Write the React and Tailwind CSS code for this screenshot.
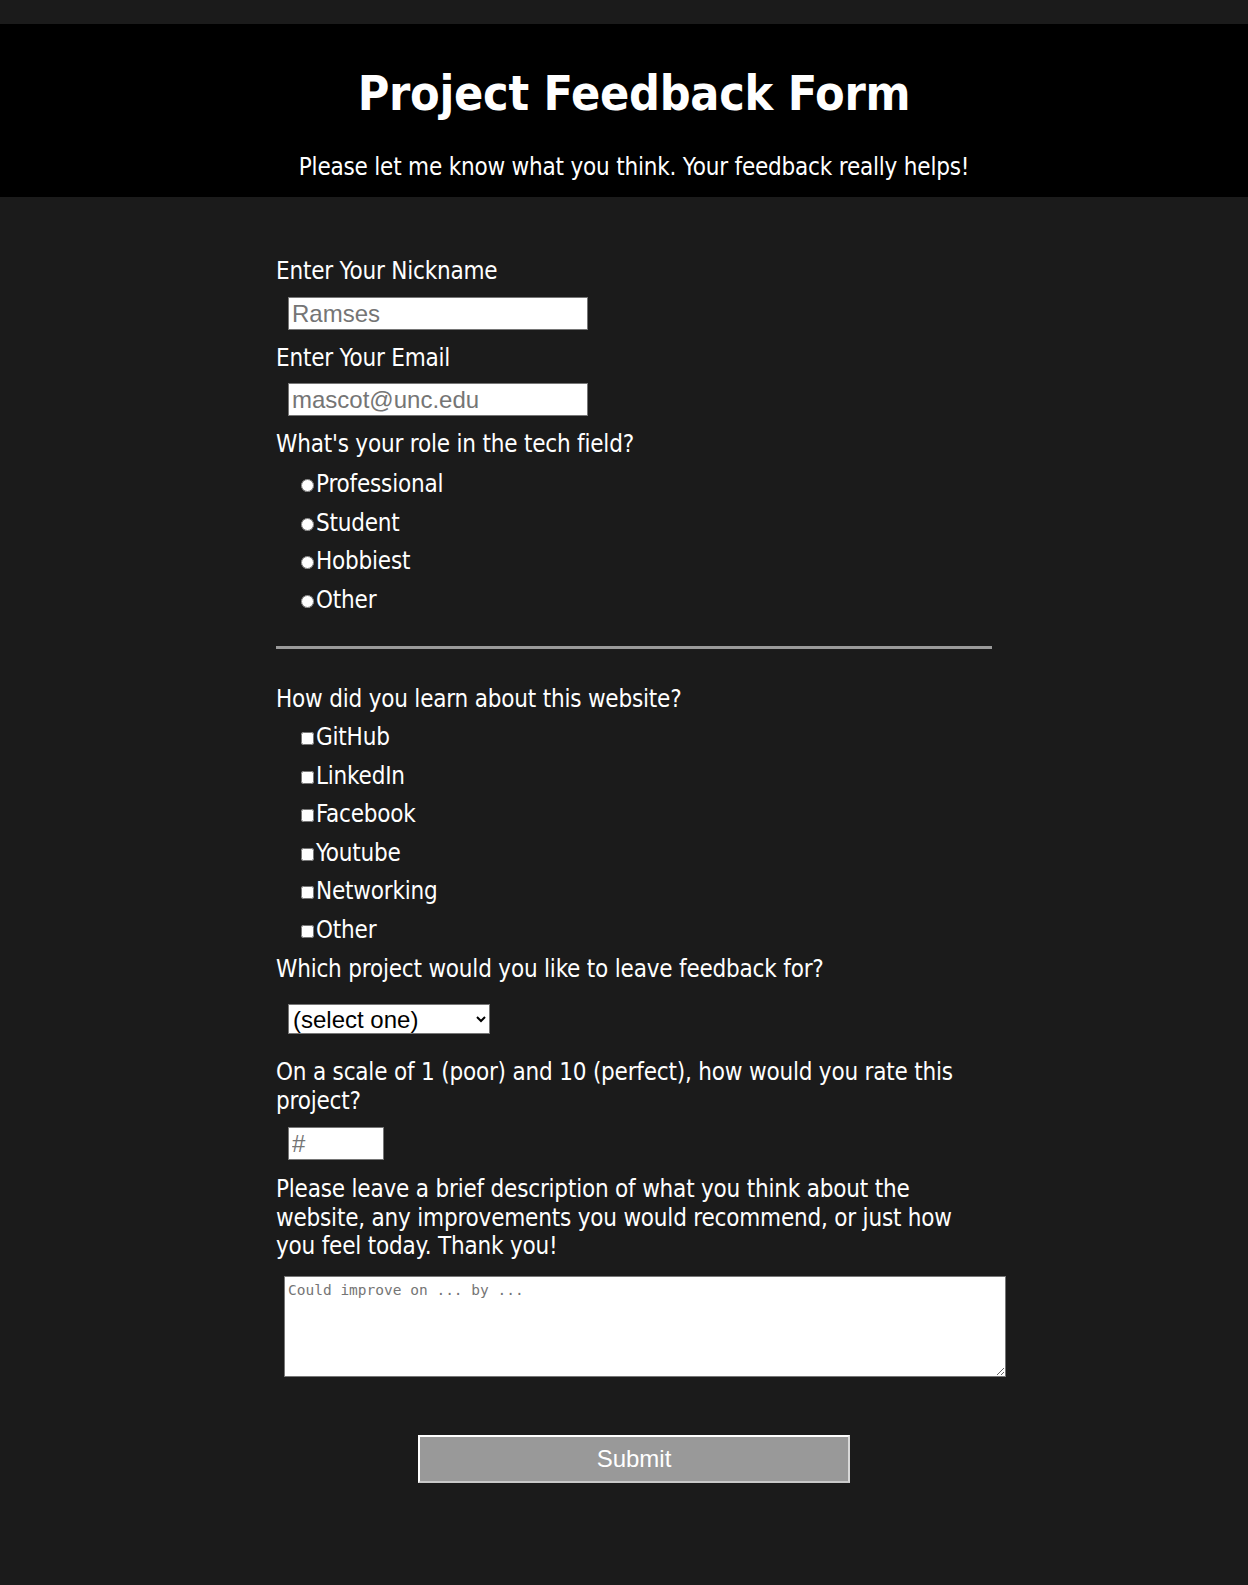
import React from "react";

const radios = ["Professional", "Student", "Hobbiest", "Other"];
const checks = ["GitHub", "LinkedIn", "Facebook", "Youtube", "Networking", "Other"];

export default function App() {
  const body = { fontFamily: '"DejaVu Sans Condensed", "DejaVu Sans", sans-serif' };
  const arial = { fontFamily: '"Liberation Sans", Arial, sans-serif' };
  return (
    <div className="min-h-[1585px] bg-[#1b1b1b] pt-[24px] tracking-[-0.2px] text-white" style={body}>
      <header className="bg-black pl-[20px] pt-[40px] pb-[15px] text-center">
        <h1 className="text-[48px] font-bold leading-[58px] tracking-[-0.25px]">Project Feedback Form</h1>
        <p className="mt-[31px] text-[24px] leading-[29px]">
          Please let me know what you think. Your feedback really helps!
        </p>
      </header>

      <div className="pl-[20px]">
        <form className="mx-auto flex w-[716px] flex-col pt-[60px] pb-[100px] text-[24px] leading-[29px]">
          <label className="block">Enter Your Nickname</label>
          <input
            type="text"
            placeholder="Ramses"
            className="mt-[11px] ml-[12px] h-[33px] w-[300px] border border-[#767676] bg-white pl-[3px] text-[24px] tracking-normal text-black placeholder:text-[#757575]"
            style={arial}
          />
          <label className="mt-[14px] block">Enter Your Email</label>
          <input
            type="email"
            placeholder="mascot@unc.edu"
            className="mt-[10px] ml-[12px] h-[33px] w-[300px] border border-[#767676] bg-white pl-[3px] text-[24px] tracking-normal text-black placeholder:text-[#757575]"
            style={arial}
          />
          <label className="mt-[14px] block">What's your role in the tech field?</label>
          <div className="mt-[11px] flex flex-col gap-[9.7px] pl-[25px]">
            {radios.map((r) => (
              <label key={r} className="flex h-[29px] items-baseline">
                <input type="radio" name="role" className="m-0 mb-[2px] h-[13px] w-[13px]" />
                <span className="ml-[2px]">{r}</span>
              </label>
            ))}
          </div>

          <div className="mt-[31px] h-[3px] w-full bg-[#9a9a9a]" />

          <label className="mt-[36px] block">How did you learn about this website?</label>
          <div className="mt-[9px] flex flex-col gap-[9.6px] pl-[25px]">
            {checks.map((c) => (
              <label key={c} className="flex h-[29px] items-baseline">
                <input type="checkbox" className="m-0 mb-[2px] h-[13px] w-[13px]" />
                <span className="ml-[2px]">{c}</span>
              </label>
            ))}
          </div>

          <label className="mt-[10px] block">Which project would you like to leave feedback for?</label>
          <select
            className="mt-[20px] ml-[12px] h-[30px] w-[202px] border border-[#767676] bg-white pl-0 text-[24px] tracking-normal text-black"
            style={arial}
            defaultValue=""
          >
            <option value="">(select one)</option>
            <option>Project 1</option>
            <option>Project 2</option>
          </select>

          <label className="mt-[24px] block leading-[28.5px]">
            On a scale of 1 (poor) and 10 (perfect), how would you rate this project?
          </label>
          <input
            type="number"
            placeholder="#"
            className="mt-[12px] ml-[12px] h-[33px] w-[96px] border border-[#767676] bg-white pl-[3px] text-[24px] tracking-normal text-black placeholder:text-[#757575]"
            style={arial}
          />

          <label className="mt-[15px] block leading-[28.5px]">
            Please leave a brief description of what you think about the website, any improvements you
            would recommend, or just how you feel today. Thank you!
          </label>
          <textarea
            placeholder="Could improve on ... by ..."
            className="mt-[15px] ml-[8px] h-[101px] w-[722px] border border-[#767676] bg-white px-[3px] pt-[5px] pb-[2px] text-[14.5px] leading-[17px] tracking-normal text-black placeholder:text-[#757575]"
            style={{ fontFamily: '"DejaVu Sans Mono", monospace' }}
          />

          <button
            type="submit"
            className="mx-auto mt-[58px] h-[48px] w-[432px] border-2 border-t-white border-l-white border-r-[#d8d8d8] border-b-[#c8c8c8] bg-[#999999] text-[24px] tracking-normal text-white"
            style={arial}
          >
            Submit
          </button>
        </form>
      </div>
    </div>
  );
}
